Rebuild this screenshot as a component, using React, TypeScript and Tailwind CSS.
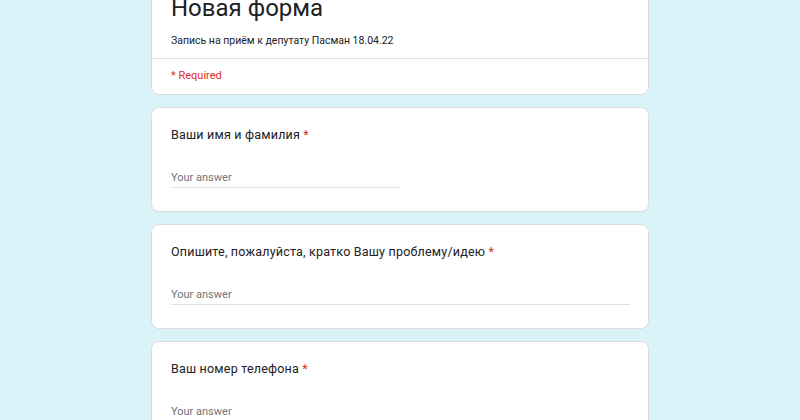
const questions = [
  { title: "Ваши имя и фамилия", wide: false },
  { title: "Опишите, пожалуйста, кратко Вашу проблему/идею", wide: true },
  { title: "Ваш номер телефона", wide: false },
];

const Question = ({ title, wide }: { title: string; wide: boolean }) => (
  <div className="bg-white rounded-lg border border-[#dadce0] pl-[19px] pr-[18px] pt-[17px] pb-[23px]">
    <div className="text-[12.5px] leading-[20px] text-[#202124] tracking-[0.2px]">
      {title} <span className="text-[#d93025]">*</span>
    </div>
    <div
      className={`mt-[25px] border-b border-[#e0e0e0] pb-[1px] text-[11px] leading-[16px] text-[#70757a] ${
        wide ? "w-full" : "w-[230px]"
      }`}
    >
      Your answer
    </div>
  </div>
);

const App = () => {
  return (
    <div
      className="w-full h-[420px] overflow-hidden bg-[#d9f3f8]"
      style={{ fontFamily: "Roboto, 'Noto Sans', sans-serif" }}
    >
      <div className="w-[498px] mx-auto -mt-[20px] flex flex-col gap-[12px]">
        <div className="bg-white rounded-lg border border-[#dadce0]">
          <div className="px-[19px] pt-[11px] pb-[9px] border-b border-[#e0e0e0]">
            <div className="text-[24px] leading-[32px] text-[#202124]">Новая форма</div>
            <div className="mt-[9px] text-[10.5px] leading-[16px] text-[#202124]">
              Запись на приём к депутату Пасман 18.04.22
            </div>
          </div>
          <div className="px-[19px] pt-[9px] pb-[10px] text-[11px] leading-[16px] text-[#d93025]">
            * Required
          </div>
        </div>
        {questions.map((q) => (
          <Question key={q.title} title={q.title} wide={q.wide} />
        ))}
      </div>
    </div>
  );
};

export default App;
